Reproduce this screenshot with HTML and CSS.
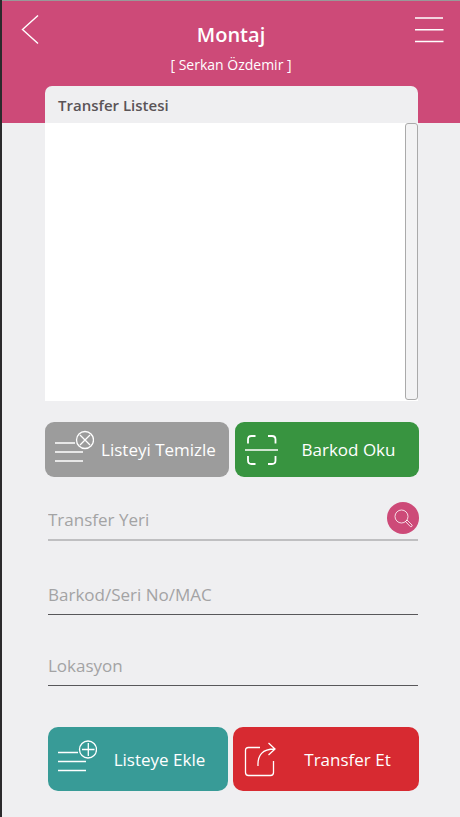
FILE: index.html
```html
<!DOCTYPE html>
<html lang="tr">
<head>
<meta charset="utf-8">
<meta name="viewport" content="width=device-width, initial-scale=1">
<title>Montaj</title>
<link rel="stylesheet" href="styles.css">
</head>
<body>
<header class="topbar">
  <button class="icon-button" type="button" aria-label="Geri">
    <svg width="30" height="30" viewBox="0 0 30 30"><path d="M17 0.500 1.500 14.500 17 28.500"/></svg>
  </button>
  <div class="heading">
    <h1>Montaj</h1>
    <p>[ Serkan Özdemir ]</p>
  </div>
  <button class="icon-button" type="button" aria-label="Menü">
    <svg width="30" height="30" viewBox="0 0 30 30"><path d="M1 3h28M1 14.700h28.500M1 26.500h28.500"/></svg>
  </button>
</header>
<main>
  <section class="panel">
    <h2>Transfer Listesi</h2>
    <div class="list"><div class="scroll-thumb"></div></div>
  </section>
  <div class="actions">
    <button class="action clear" type="button">
      <svg width="40" height="40" viewBox="0 0 40 40"><path d="M1 13h20M1 22h28M1 31h28"/><circle cx="31" cy="10" r="8.500"/><path d="m26 5 10 10M36 5l-10 10"/></svg>
      <span>Listeyi Temizle</span>
    </button>
    <button class="action scan" type="button">
      <svg width="40" height="40" viewBox="0 0 40 40"><path d="M1 20h33"/><path class="bold" d="M4 13.500v-4q0-3.500 3.500-3.500H11.500M24 6h4q3.500 0 3.500 3.500V13.500M4 26v4.500q0 3.500 3.500 3.500H11.500M24 34h4q3.500 0 3.500-3.500V26"/></svg>
      <span>Barkod Oku</span>
    </button>
  </div>
  <form class="entry">
    <div class="field place">
      <input type="text" aria-label="Transfer Yeri" placeholder="Transfer Yeri">
      <button class="search" type="button" aria-label="Ara">
        <svg width="32" height="32" viewBox="0 0 32 32"><circle cx="14.500" cy="14.500" r="6.500"/><path d="m18.500 19.500 1.500-1.500 5 5q.5 1-.3 1.500-.8.500-1.400 0z"/></svg>
      </button>
    </div>
    <div class="field"><input type="text" aria-label="Barkod/Seri No/MAC" placeholder="Barkod/Seri No/MAC"></div>
    <div class="field"><input type="text" aria-label="Lokasyon" placeholder="Lokasyon"></div>
    <div class="actions tall">
      <button class="action add" type="button">
        <svg width="40" height="40" viewBox="0 0 40 40"><path d="M1 13.500h20M1 22.500h28M1 31.500h28"/><circle cx="31" cy="10.500" r="8.500"/><path d="M25 10.500h12.500M31.300 4v13"/></svg>
        <span>Listeye Ekle</span>
      </button>
      <button class="action send" type="button">
        <svg width="40" height="40" viewBox="0 0 40 40"><path d="M18 8.500H6.500q-3 0-3 3v22q0 3 3 3h22q3 0 3-3V22"/><path d="M16 27c-.5-11 4.500-17 16.500-17M26.500 4l6.500 6-6.500 6"/></svg>
        <span>Transfer Et</span>
      </button>
    </div>
  </form>
</main>
</body>
</html>
```
FILE: styles.css
```css
* { box-sizing: border-box; }

body {
  margin: 0;
  min-height: 100vh;
  background: #efeff1;
  border-left: 2px solid #2b2a2c;
  font-family: "Open Sans", sans-serif;
}

h1, h2, p { margin: 0; }

button {
  border: 0;
  padding: 0;
  font: inherit;
  color: #fff;
}

svg {
  display: block;
  flex: none;
  fill: none;
  stroke: #fff;
  stroke-width: 1.4;
}

.topbar {
  display: flex;
  justify-content: space-between;
  align-items: flex-start;
  height: 123px;
  padding: 14px 16px 0 19px;
  background: #cd4a78;
  border-top: 1px solid #999;
  color: #fff;
}

.icon-button { background: none; }

.heading {
  padding: 6px 3px 0 0;
  text-align: center;
}

.heading h1 {
  font-size: 20px;
  line-height: 28px;
  font-weight: 600;
}

.heading p {
  padding-top: 6px;
  font-size: 14px;
  line-height: 20px;
}

main { padding: 0 41px 24px 43px; }

.panel { margin: -37px 1px 0 0; }

.panel h2 {
  height: 37px;
  padding-left: 13px;
  border-radius: 7px 7px 0 0;
  background: #efeff1;
  color: #5a5457;
  font-size: 15px;
  line-height: 38px;
  font-weight: 600;
}

.list {
  display: flex;
  justify-content: flex-end;
  height: 278px;
  background: #fff;
}

.scroll-thumb {
  width: 13px;
  height: 277px;
  border: 1px solid #aaa;
  border-radius: 3px;
  background: #f3f3f4;
}

.actions {
  display: grid;
  grid-template-columns: 1fr 1fr;
  gap: 6px;
  margin-top: 21px;
}

.action {
  display: flex;
  align-items: center;
  height: 55px;
  padding: 0 8px 0 9px;
  border-radius: 9px;
  font-size: 17px;
  line-height: 24px;
}

.action svg { stroke-width: 1.3; }
.action .bold { stroke-width: 1.8; }

.action span {
  flex: 1;
  padding: 1px 0 0 2px;
  text-align: center;
  white-space: nowrap;
}

.clear { background: #9c9c9c; }
.scan { background: #389440; }
.add { background: #389b97; }
.send { background: #d72a31; }

.entry { padding-left: 3px; }

.field {
  display: flex;
  align-items: center;
  height: 41px;
  margin: 30px 1px 0 0;
  border-bottom: 1px solid #58575a;
}

.field.place {
  height: 42px;
  margin: 22px 1px 33px 0;
  border-bottom: 2px solid #bfbfc1;
}

.field input {
  flex: 1;
  min-width: 0;
  height: 32px;
  border: 0;
  padding: 0;
  outline: 0;
  background: none;
  color: #58575a;
  font: 17px/24px "Open Sans", sans-serif;
}

.field input::placeholder {
  color: #a3a3a4;
  opacity: 1;
}

.search {
  width: 32px;
  height: 32px;
  margin: 0 -1px 2px 0;
  border-radius: 50%;
  background: #cd4a78;
}

.search svg { stroke-width: 0.8; }

.tall {
  grid-template-columns: 180fr 186fr;
  gap: 5px;
  margin-top: 41px;
}

.tall .action { height: 64px; border-radius: 10px; }
```
